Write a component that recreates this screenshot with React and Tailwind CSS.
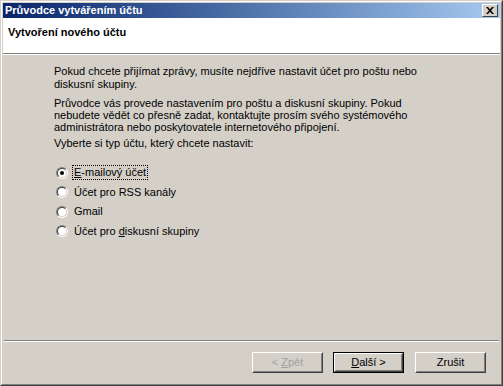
import React from 'react';

const font = { fontFamily: '"Liberation Sans", Arial, sans-serif' };

function Radio({ checked, label, focused }) {
    return (
        <div className="flex items-center h-[19.5px]">
            <div className="w-[12px] h-[12px] rounded-full border border-t-[#808080] border-l-[#808080] border-r-white border-b-white flex items-center justify-center ml-[2px]">
                <div className="w-[10px] h-[10px] rounded-full bg-white border border-t-[#404040] border-l-[#404040] border-r-[#d4d0c8] border-b-[#d4d0c8] flex items-center justify-center">
                    {checked && <div className="w-[4px] h-[4px] rounded-full bg-black" />}
                </div>
            </div>
            <span className={`ml-[5px] px-[1px] leading-[13px] ${focused ? 'outline outline-1 outline-dotted outline-black' : ''}`}>
                {label}
            </span>
        </div>
    );
}

function Button({ children, disabled, isDefault }) {
    return (
        <div className={`${isDefault ? 'border border-black' : ''} w-[71px] h-[21px]`}>
            <div className="w-full h-full border border-t-white border-l-white border-r-[#404040] border-b-[#404040] bg-[#d4d0c8]">
                <div className="w-full h-full border border-transparent border-r-[#808080] border-b-[#808080] flex items-center justify-center">
                    <span className={disabled ? 'text-[#a0a0a0]' : 'text-black'}>{children}</span>
                </div>
            </div>
        </div>
    );
}

export default function App() {
    return (
        <div className="w-[503px] h-[386px] bg-[#d4d0c8] text-[11px] text-black select-none" style={font}>
            <div className="w-full h-full border border-t-[#d4d0c8] border-l-[#d4d0c8] border-r-[#404040] border-b-[#404040]">
                <div className="w-full h-full border border-t-white border-l-white border-r-[#808080] border-b-[#808080] flex flex-col p-[1px]">
                    {/* Title bar */}
                    <div className="h-[15px] flex items-center justify-between bg-gradient-to-r from-[#0a246a] to-[#a6caf0] pl-[2px] pr-[2px]">
                        <span className="text-white font-bold text-[11px] leading-[13px]">Průvodce vytvářením účtu</span>
                        <div className="w-[16px] h-[13px] bg-[#d4d0c8] border border-t-white border-l-white border-r-[#404040] border-b-[#404040] flex items-center justify-center">
                            <svg width="8" height="7" viewBox="0 0 8 7">
                                <path d="M0 0h2l2 2.2L6 0h2L5 3.5 8 7H6L4 4.8 2 7H0l3-3.5z" fill="black" />
                            </svg>
                        </div>
                    </div>

                    {/* Header */}
                    <div className="h-[36px] bg-white border-b border-[#808080] pl-[5px] pt-[6px]">
                        <span className="font-bold leading-[13px]">Vytvoření nového účtu</span>
                    </div>
                    <div className="h-[1px] bg-white" />

                    {/* Body */}
                    <div className="flex-1 pl-[51px] pr-[60px] pt-[10px]">
                        <p className="leading-[13px]">
                            Pokud chcete přijímat zprávy, musíte nejdříve nastavit účet pro poštu nebo diskusní skupiny.
                        </p>
                        <p className="leading-[12px] mt-[6px]">
                            Průvodce vás provede nastavením pro poštu a diskusní skupiny. Pokud nebudete vědět co přesně zadat, kontaktujte prosím svého systémového administrátora nebo poskytovatele internetového připojení.
                        </p>
                        <p className="leading-[13px] mt-[4px]">Vyberte si typ účtu, který chcete nastavit:</p>

                        <div className="mt-[13px] flex flex-col">
                            <Radio checked focused label={<><u>E</u>-mailový účet</>} />
                            <Radio label="Účet pro RSS kanály" />
                            <Radio label="Gmail" />
                            <Radio label={<>Účet pro <u>d</u>iskusní skupiny</>} />
                        </div>
                    </div>

                    {/* Bottom */}
                    <div className="h-[1px] bg-[#808080] mx-[1px]" />
                    <div className="h-[1px] bg-white mx-[1px]" />
                    <div className="h-[41px] flex items-start justify-end pt-[10px] pr-[14px] gap-[10px]">
                        <Button disabled>&lt; <u>Z</u>pět</Button>
                        <div className="mr-[1px]">
                            <Button isDefault><u>D</u>alší &gt;</Button>
                        </div>
                        <Button>Zrušit</Button>
                    </div>
                </div>
            </div>
        </div>
    );
}
